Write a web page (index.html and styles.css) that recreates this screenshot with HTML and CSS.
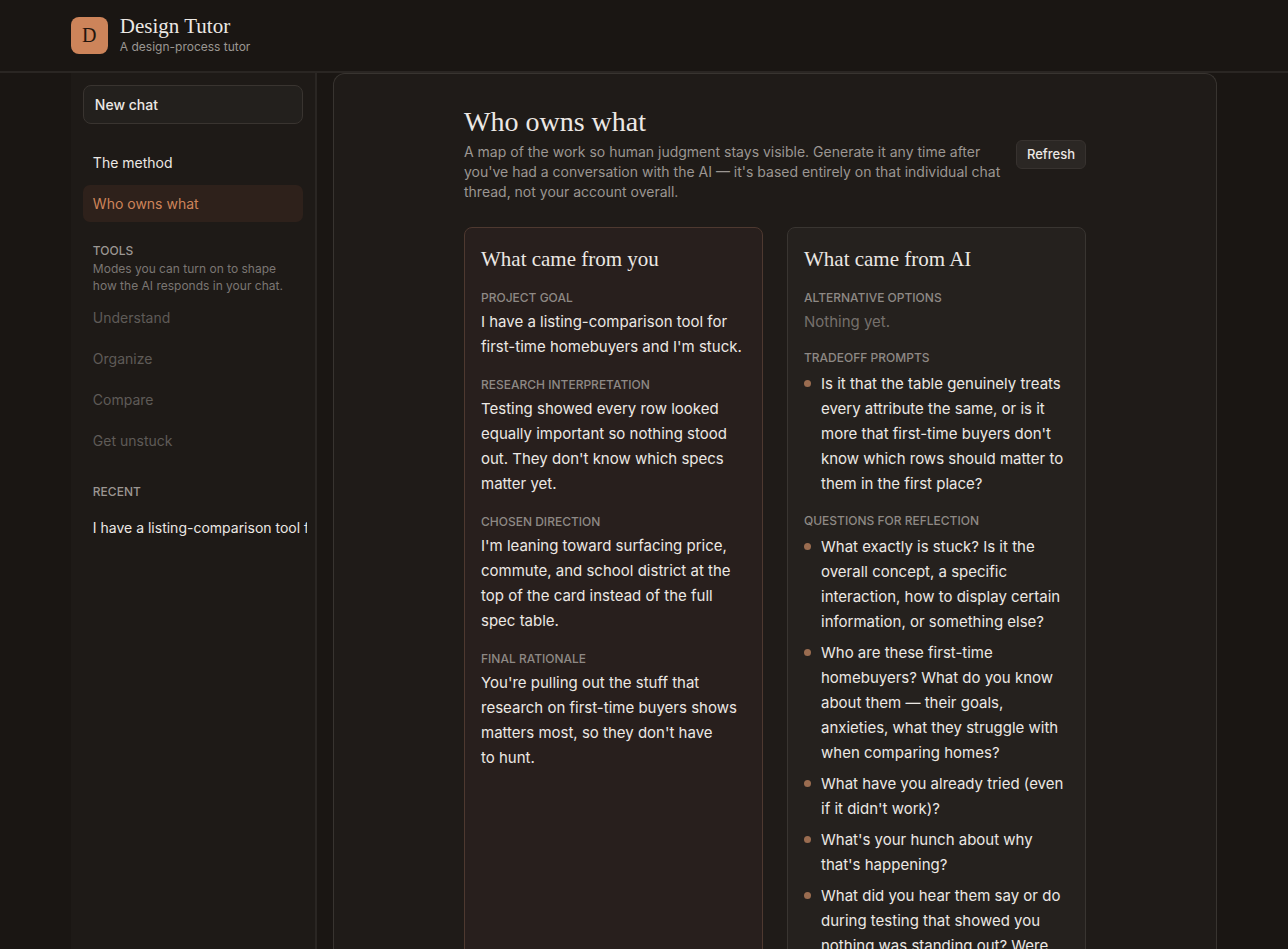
FILE: index.html
```html
<!DOCTYPE html>
<html lang="en">
<head>
<meta charset="utf-8">
<meta name="viewport" content="width=device-width, initial-scale=1">
<title>Design Tutor</title>
<link rel="stylesheet" href="styles.css">
</head>
<body>
<header class="topbar">
  <div class="container brand">
    <span class="logo" aria-hidden="true">D</span>
    <div class="brand-text">
      <div class="brand-name">Design Tutor</div>
      <div class="brand-sub">A design-process tutor</div>
    </div>
  </div>
</header>
<div class="container shell">
  <aside class="sidebar">
    <button class="new-chat" type="button">New chat</button>
    <nav class="nav" aria-label="Pages">
      <a class="nav-item" href="#method">The method</a>
      <a class="nav-item active" href="#owns" aria-current="page">Who owns what</a>
    </nav>
    <section class="tools">
      <h2 class="side-label">Tools</h2>
      <p class="side-note">Modes you can turn on to shape how the AI responds in your chat.</p>
      <div class="nav">
        <button class="nav-item" type="button" disabled>Understand</button>
        <button class="nav-item" type="button" disabled>Organize</button>
        <button class="nav-item" type="button" disabled>Compare</button>
        <button class="nav-item" type="button" disabled>Get unstuck</button>
      </div>
    </section>
    <section class="recent">
      <h2 class="side-label">Recent</h2>
      <a class="recent-item" href="#chat">I have a listing-comparison tool for</a>
    </section>
  </aside>
  <main class="panel">
    <div class="content">
      <div class="intro">
        <div class="intro-text">
          <h1>Who owns what</h1>
          <p>A map of the work so human judgment stays visible. Generate it any time after you've had a conversation with the AI — it's based entirely on that individual chat thread, not your account overall.</p>
        </div>
        <button class="refresh" type="button">Refresh</button>
      </div>
      <div class="cards">
        <section class="card you">
          <h2>What came from you</h2>
          <h3>Project goal</h3>
          <p>I have a listing-comparison tool for first-time homebuyers and I'm stuck.</p>
          <h3>Research interpretation</h3>
          <p>Testing showed every row looked equally important so nothing stood out. They don't know which specs matter yet.</p>
          <h3>Chosen direction</h3>
          <p>I'm leaning toward surfacing price, commute, and school district at the top of the card instead of the full spec table.</p>
          <h3>Final rationale</h3>
          <p>You're pulling out the stuff that research on first-time buyers shows matters most, so they don't have to&nbsp;hunt.</p>
        </section>
        <section class="card">
          <h2>What came from AI</h2>
          <h3>Alternative options</h3>
          <p class="empty">Nothing yet.</p>
          <h3>Tradeoff prompts</h3>
          <ul>
            <li>Is it that the table genuinely treats every attribute the same, or is it more that first-time buyers don't know which rows should matter to them in the first place?</li>
          </ul>
          <h3>Questions for reflection</h3>
          <ul>
            <li>What exactly is stuck? Is it the overall concept, a specific interaction, how to display certain information, or something else?</li>
            <li>Who are these first-time homebuyers? What do you know about them — their goals, anxieties, what they struggle with when comparing homes?</li>
            <li>What have you already tried (even if it didn't work)?</li>
            <li>What's your hunch about why that's happening?</li>
            <li>What did you hear them say or do during testing that showed you nothing was standing out? Were</li>
          </ul>
        </section>
      </div>
    </div>
  </main>
</div>
</body>
</html>
```
FILE: styles.css
```css
* { box-sizing: border-box; }
h1, h2, h3, p, ul { margin: 0; padding: 0; font-weight: 400; }
body {
  margin: 0;
  height: 100vh;
  overflow: hidden;
  display: flex;
  flex-direction: column;
  background: #1a1613;
  color: #ece8e4;
  font-family: Inter, "Liberation Sans", sans-serif;
  font-size: 15px;
  line-height: 25px;
}
button { font: inherit; color: inherit; text-align: left; cursor: pointer; }
a { color: inherit; text-decoration: none; }

.container { width: 89%; margin: 0 auto; }
.topbar { flex: none; border-bottom: 2px solid #2a2623; }
.brand { display: flex; align-items: center; gap: 12px; height: 71px; }
.logo {
  width: 37px;
  height: 37px;
  border-radius: 8px;
  background: #cd845a;
  color: #24150d;
  font: 20px/37px "Liberation Serif", serif;
  text-align: center;
}
.brand-text { padding-bottom: 2px; }
.brand-name { font: 21px/24px "Liberation Serif", serif; }
.brand-sub { font-size: 12px; line-height: 17px; color: #9b9692; }

.shell { flex: 1; min-height: 0; display: flex; gap: 16px; }
.sidebar {
  flex: none;
  width: 246px;
  padding: 12px;
  background: #1e1a17;
  border-right: 2px solid #2a2623;
}
.new-chat {
  display: block;
  width: 100%;
  height: 39px;
  margin-bottom: 20px;
  padding: 0 11px;
  border: 1px solid #393430;
  border-radius: 8px;
  background: #23201d;
  font-size: 14px;
  font-weight: 500;
}
.nav { display: flex; flex-direction: column; gap: 4px; }
.nav-item {
  height: 37px;
  padding: 0 10px;
  border: 0;
  border-radius: 7px;
  background: none;
  font-size: 14px;
  line-height: 37px;
}
.nav-item.active { background: #2e211b; color: #cd845a; }
.nav-item:disabled { color: #5f5b57; cursor: default; }
.tools { margin-top: 20px; }
.side-label {
  padding: 0 10px;
  font-size: 12px;
  line-height: 18px;
  font-weight: 500;
  text-transform: uppercase;
  color: #9b9692;
}
.side-note { padding: 0 10px; margin-bottom: 5px; font-size: 12px; line-height: 17px; color: #7b7673; }
.recent { margin-top: 24px; }
.recent-item {
  display: block;
  margin: 8px -4px 0 10px;
  overflow: hidden;
  white-space: nowrap;
  font-size: 14px;
  line-height: 37px;
}

.panel {
  flex: 1;
  min-width: 0;
  overflow: hidden;
  border: 1px solid #383430;
  border-bottom: 0;
  border-radius: 12px 12px 0 0;
  background: #1f1b18;
}
.content { max-width: 622px; margin: 0 auto; padding-top: 32px; }
.intro { display: flex; align-items: center; justify-content: space-between; gap: 8px; }
.intro-text { max-width: 544px; }
.intro h1 { font: 28px/32px "Liberation Serif", serif; margin-bottom: 4px; }
.intro p { font-size: 14px; line-height: 20px; color: #9b9692; }
.refresh {
  flex: none;
  height: 29px;
  padding: 0 10px;
  border: 1px solid #37322f;
  border-radius: 6px;
  background: #2b2724;
  font-size: 13px;
  font-weight: 500;
  line-height: 27px;
}
.cards { display: grid; grid-template-columns: 1fr 1fr; gap: 24px; margin-top: 25px; }
.card {
  padding: 16px 16px 24px;
  border: 1px solid #393531;
  border-radius: 8px;
  background: #25211e;
}
.card.you { background: #281f1d; border-color: #4e3930; }
.card h2 { font: 21px/30px "Liberation Serif", serif; margin-bottom: 15px; }
.card h3 {
  margin-bottom: 2px;
  font-size: 12px;
  line-height: 18px;
  font-weight: 500;
  text-transform: uppercase;
  color: #8e8985;
}
.card p { margin-bottom: 17px; }
.card ul { margin-bottom: 16px; }
.card .empty { margin-bottom: 15px; color: #75706c; }
.card ul { display: grid; gap: 6px; list-style: none; padding-top: 2px; }
.card li { display: grid; grid-template-columns: 7px 1fr; gap: 10px; }
.card li::before { content: ""; height: 7px; margin-top: 9px; border-radius: 50%; background: #9a6c50; }
```
